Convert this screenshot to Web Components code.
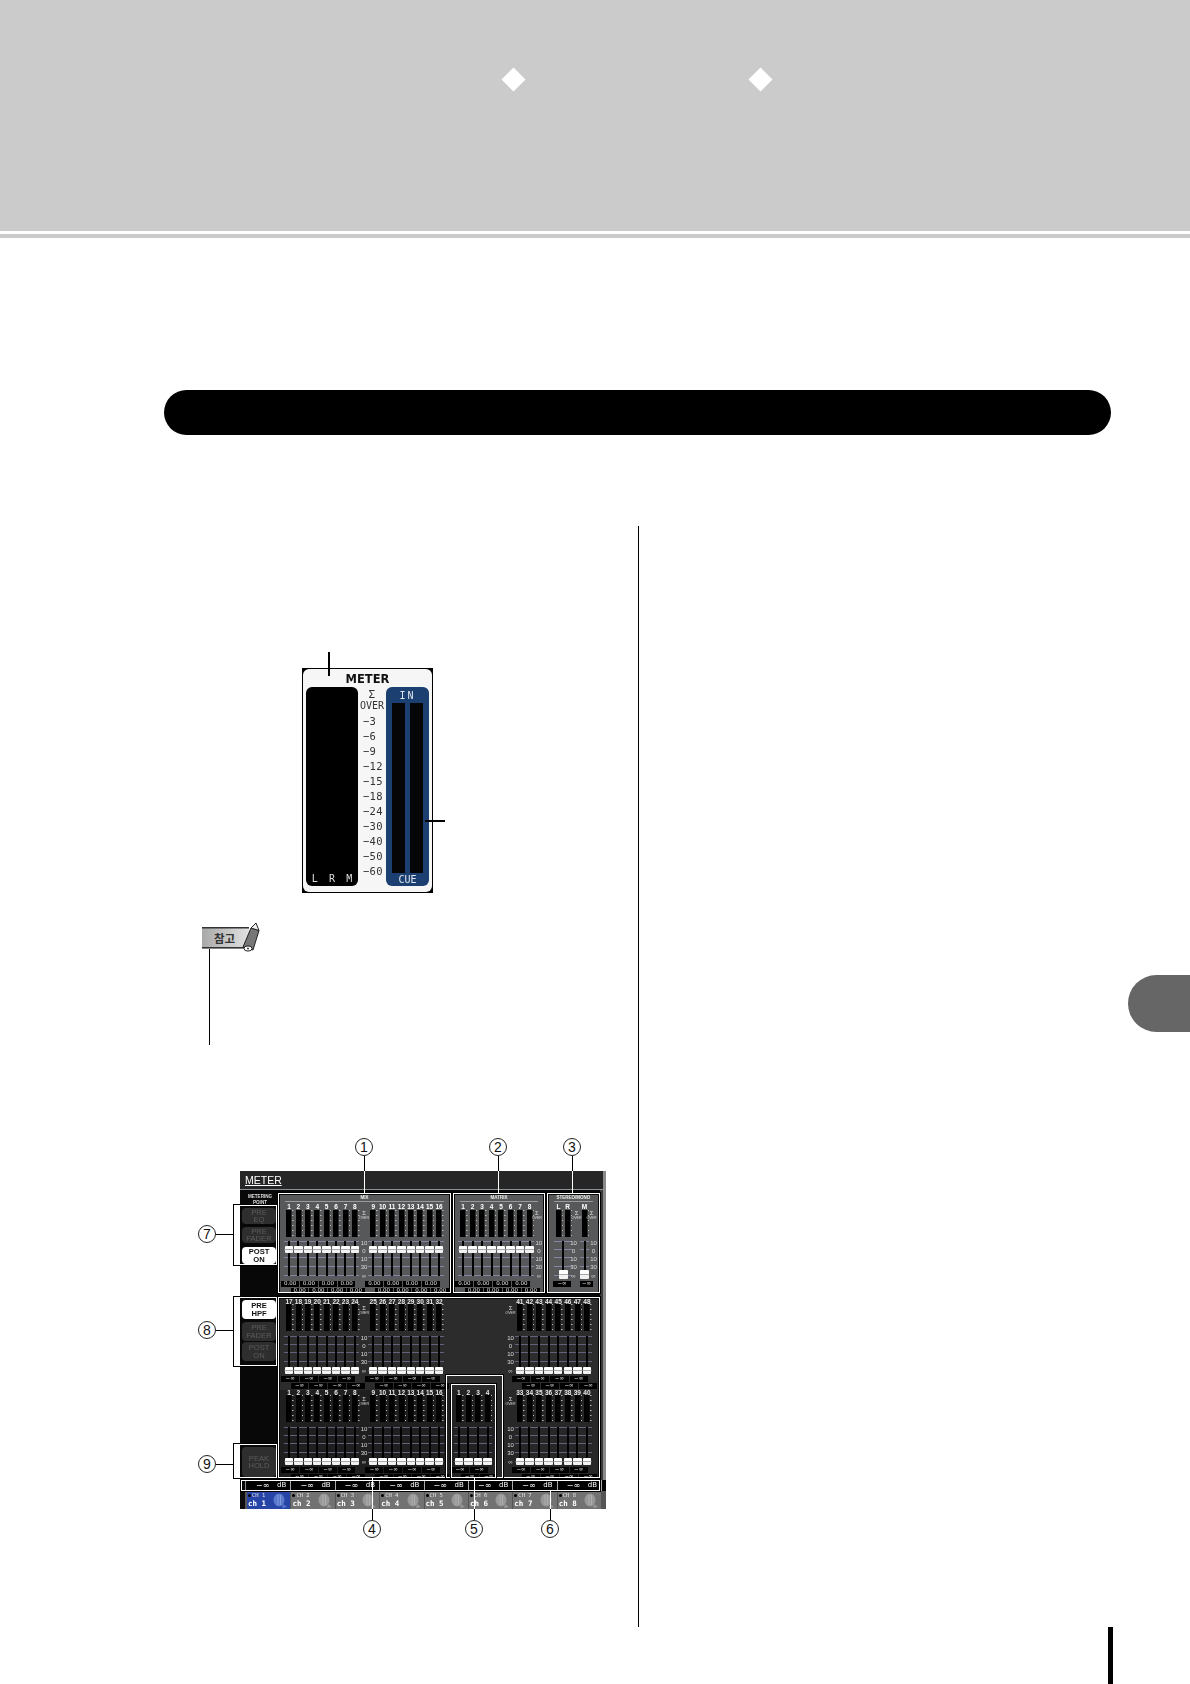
<!DOCTYPE html>
<html lang="ko">
<head>
<meta charset="utf-8">
<title>METER</title>
<style>
  html, body { margin: 0; background: #fff; }
</style>
</head>
<body>
<manual-page>
  <meter-panel slot="left"></meter-panel>
  <note-tag slot="left"></note-tag>
  <meter-screen slot="left"></meter-screen>
</manual-page>

<script>
// Page frame: grey band, black pill, two columns split by a rule
class ManualPage extends HTMLElement {
  constructor() {
    super();
    this.attachShadow({ mode: 'open' });
    this.shadowRoot.innerHTML = `
      <style>
        :host { display: block; width: 1190px; height: 1684px; overflow: hidden; font-family: "Liberation Sans", sans-serif; }
        .band { height: 231px; box-sizing: border-box; background: #cbcbcb; padding: 71px 0 0 505px; display: flex; gap: 230px; }
        .band i { width: 17px; height: 17px; background: #fff; transform: rotate(45deg); }
        .thin { height: 4px; margin-top: 3px; background: #cbcbcb; }
        .pill { margin: 152px 0 0 164px; width: 947px; height: 45px; border-radius: 23px; background: #000; }
        .cols { margin-top: 91px; height: 1101px; display: grid; grid-template-columns: 638px 1fr; }
        .right { border-left: 1px solid #000; padding-top: 449px; }
        .tab { margin-left: auto; width: 62px; height: 57px; border-radius: 29px 0 0 29px; background: #666; }
        .foot { margin-left: 1108px; width: 5px; height: 57px; background: #000; }
      </style>
      <div class="band"><i></i><i></i></div>
      <div class="thin"></div>
      <div class="pill"></div>
      <div class="cols">
        <div><slot name="left"></slot></div>
        <div class="right"><div class="tab"></div></div>
      </div>
      <div class="foot"></div>
    `;
  }
}

// The small METER panel with the big scale
class MeterPanel extends HTMLElement {
  constructor() {
    super();
    this.attachShadow({ mode: 'open' });
    const marks = ['−3','−6','−9','−12','−15','−18','−24','−30','−40','−50','−60'];
    this.shadowRoot.innerHTML = `
      <style>
        :host { display: block; position: relative; width: 131px; height: 225px; margin: 142px 0 0 302px; background: #000; font-family: "DejaVu Sans Mono", monospace; }
        .inner { position: absolute; inset: 1px; border-radius: 6px; background: #f6f6f6; box-sizing: border-box; padding: 0 3px; filter: blur(.3px); }
        .title { height: 18px; padding-top: 3px; box-sizing: border-box; text-align: center; font: bold 11.5px/14px "DejaVu Sans", sans-serif; color: #111; }
        .row { display: flex; height: 199px; }
        .lamp { width: 52px; border-radius: 6px; background: #000; color: #ddd; font-size: 10px; display: flex; align-items: flex-end; justify-content: space-around; padding: 0 0 2px; box-sizing: border-box; }
        .scale { width: 28px; color: #333; font-size: 10.5px; letter-spacing: .3px; }
        .scale div { height: 15px; line-height: 15px; padding-left: 5px; }
        .scale .sigma { height: 16px; line-height: 16px; text-align: center; padding: 0; font-size: 11px; }
        .scale .over { height: 6px; line-height: 6px; margin-bottom: 5px; padding: 0; text-align: center; font-size: 10px; letter-spacing: 0; }
        .cue { width: 43px; border-radius: 6px; background: #1b3f70; color: #dfe6ee; font-size: 10px; text-align: center; }
        .cue .lbl { height: 16px; line-height: 17px; letter-spacing: 2px; }
        .cue .lbl.b { height: 13px; line-height: 14px; letter-spacing: 0; }
        .bars { height: 170px; display: flex; justify-content: center; gap: 5px; }
        .bars i { width: 13px; background: #060606; }
        .lead { position: absolute; background: #000; }
      </style>
      <div class="inner">
        <div class="title">METER</div>
        <div class="row">
          <div class="lamp"><span>L</span><span>R</span><span>M</span></div>
          <div class="scale">
            <div class="sigma">Σ</div><div class="over">OVER</div>
            ${marks.map(m => `<div>${m}</div>`).join('')}
          </div>
          <div class="cue">
            <div class="lbl">IN</div>
            <div class="bars"><i></i><i></i></div>
            <div class="lbl b">CUE</div>
          </div>
        </div>
      </div>
      <div class="lead" style="left:26px;top:-16px;width:1.5px;height:24px"></div>
      <div class="lead" style="left:123px;top:152px;width:20px;height:1.5px"></div>
    `;
  }
}

// 참고 ribbon with its rule going down
class NoteTag extends HTMLElement {
  constructor() {
    super();
    this.attachShadow({ mode: 'open' });
    this.shadowRoot.innerHTML = `
      <style>
        :host { display: block; margin: 28px 0 0 201px; width: 60px; }
        .tag { position: relative; height: 32px; margin-bottom: -4px; }
        svg { display: block; }
        span { position: absolute; left: 1.5px; top: 6px; width: 44px; height: 21px; display: flex; align-items: center; justify-content: center; font: bold 11.5px "Noto Sans CJK KR", sans-serif; color: #333; }
        .rule { margin-left: 7.5px; width: 1.5px; height: 96px; background: #000; }
      </style>
      <div class="tag">
        <svg width="60" height="32" viewBox="0 0 60 32">
          <defs><linearGradient id="g" x1="0" x2="1" y1="0" y2="0">
            <stop offset="0" stop-color="#a8a8a8"/><stop offset=".55" stop-color="#c8c8c8"/><stop offset="1" stop-color="#e2e2e2"/>
          </linearGradient></defs>
          <rect x="1" y="6" width="47" height="21" fill="url(#g)"/>
          <rect x="1" y="6" width="47" height="1.5" fill="#333"/>
          <rect x="1" y="26" width="44" height="1.6" fill="#333"/>
          <path d="M50 7 L58 9.5 L52 29 L42 26 Z" fill="#777" stroke="#222" stroke-width="1"/>
          <path d="M50 7 L55 2 L58 9.5 Z" fill="#eee" stroke="#222" stroke-width="1"/>
          <ellipse cx="47" cy="27.5" rx="4" ry="2.6" fill="#fff" stroke="#222" stroke-width="1"/>
          <circle cx="47" cy="27.5" r=".9" fill="#222"/>
        </svg>
        <span>참고</span>
      </div>
      <div class="rule"></div>
    `;
  }
}

// A bank of meter strips: labels, meters, faders, value boxes
class FaderBank extends HTMLElement {
  constructor() {
    super();
    this.attachShadow({ mode: 'open' });
  }
  connectedCallback() {
    const labels = (this.getAttribute('labels') || '').split(' ');
    const strip = parseFloat(this.getAttribute('strip') || '9.4');
    const faders = parseInt(this.getAttribute('faders') || labels.length);
    const boxes = parseInt(this.getAttribute('boxes') || Math.ceil(labels.length / 2));
    const rows = parseInt(this.getAttribute('rows') || 2);
    const value = this.getAttribute('value') || '−∞';
    const knobs = Array.from({ length: faders }, () => '<div class="f"><i></i><b></b></div>').join('');
    const vals = Array.from({ length: boxes }, () => `<b>${value}</b>`).join('');
    this.shadowRoot.innerHTML = `
      <style>
        :host { display: block; flex: none; --s: ${strip}px; width: calc(var(--s) * ${labels.length}); color: #fff; font-family: "Liberation Sans", sans-serif; --box: calc(var(--s) * 2 - 1px); --off: -3px; }
        .labels { display: flex; height: 6px; font: bold 6.5px/6px "Liberation Sans", sans-serif; }
        :host([dark]) .labels { height: 5px; line-height: 5px; color: #e8e8e8; }
        :host([under]) .labels span { text-decoration: underline; }
        .labels span { flex: 1; text-align: center; white-space: nowrap; }
        .meters { display: flex; height: 27px; margin-bottom: 4px; }
        :host([dark]) .meters { margin-bottom: 5px; }
        .meters i { flex: 1; background:
          linear-gradient(#000, #000) center / 5.5px 100% no-repeat,
          repeating-linear-gradient(#b8b8b8 0 1px, transparent 1px 5px) right / 1.5px 100% no-repeat; }
        .faders { display: flex; height: 35px; margin-bottom: 5px; background:
          linear-gradient(var(--line), var(--line)) 0 0 / 100% 1px no-repeat,
          linear-gradient(var(--line), var(--line)) 0 8px / 100% 1px no-repeat,
          linear-gradient(var(--line), var(--line)) 0 16px / 100% 1px no-repeat,
          linear-gradient(var(--line), var(--line)) 0 25px / 100% 1px no-repeat,
          linear-gradient(var(--line), var(--line)) 0 34px / 100% 1px no-repeat;
          --line: #8585a5; }
        :host([dark]) .faders { --line: #62627e; }
        .f { flex: 1; position: relative; }
        .f i { position: absolute; left: calc(50% - 1px); top: 0; bottom: 0; width: 2px; background: #000; }
        .f b { position: absolute; left: calc(50% - 4.25px); width: 8.5px; height: 7px; border-radius: 1px; top: ${this.getAttribute('knob') === 'bottom' ? 31 : 5}px;
          background: linear-gradient(#fff 0 45%, #aaa 45% 55%, #f2f2f2 55%); }
        :host([big]) .f b { width: 9px; left: calc(50% - 4.5px); height: 9px; top: 29px; }
        .v { display: flex; height: 5.5px; margin-left: var(--off); margin-bottom: 1.5px; }
        .v b { flex: none; width: var(--box); margin-right: 1px; background: #000; font: 5.5px/5.5px "DejaVu Sans", sans-serif; text-align: center; overflow: hidden; color: #e4e4e4; white-space: nowrap; }
        .v.two { margin-left: calc(var(--s) - 3px); }
      </style>
      <div class="labels">${labels.map(l => `<span>${l}</span>`).join('')}</div>
      <div class="meters">${labels.map(() => '<i></i>').join('')}</div>
      <div class="faders">${knobs}</div>
      <div class="v">${vals}</div>
      ${rows > 1 ? `<div class="v two">${vals}</div>` : ''}
    `;
  }
}

// Σ OVER and dB marks set between banks
class BankScale extends HTMLElement {
  constructor() {
    super();
    this.attachShadow({ mode: 'open' });
    this.shadowRoot.innerHTML = `
      <style>
        :host { display: block; flex: none; width: 9px; font-family: "Liberation Sans", sans-serif; color: #dcdcdc; text-align: center; }
        .top { height: 39px; box-sizing: border-box; padding-top: 7px; margin-left: var(--top-nudge, 0); font-size: 3.6px; line-height: 4px; }
        .top div { width: 20px; margin-left: -5.5px; }
        .top .s { font-size: 6px; line-height: 5px; }
        .nums { margin-top: -3px; margin-left: var(--nudge, 0); font-size: 6px; line-height: 6px; }
        .nums div { width: 20px; margin-left: -5.5px; height: 8px; }
        .nums div.w { height: 9px; }
      </style>
      <div class="top"><div class="s">Σ</div><div>OVER</div></div>
      <div class="nums"><div>10</div><div>0</div><div>10</div><div class="w">30</div><div>∞</div></div>
    `;
  }
}

// Grey titled box in the upper half of the screen
class MeterGroup extends HTMLElement {
  constructor() {
    super();
    this.attachShadow({ mode: 'open' });
    this.shadowRoot.innerHTML = `
      <style>
        :host { display: block; height: 97px; overflow: hidden; background: #565859; color: #fff; font-family: "Liberation Sans", sans-serif; box-sizing: border-box; }
        .t { height: 6px; font: bold 4.5px/6px "Liberation Sans", sans-serif; text-align: center; color: #eee; }
        .r { height: 1px; margin: 0 5px 2px; background: #9a9a9a; }
        .b { display: flex; padding-left: var(--pad, 4px); }
      </style>
      <div class="t"><slot name="title"></slot></div>
      <div class="r"></div>
      <div class="b"><slot></slot></div>
    `;
  }
}

// Round sidebar key of the screen
class ScreenKey extends HTMLElement {
  constructor() {
    super();
    this.attachShadow({ mode: 'open' });
    this.shadowRoot.innerHTML = `
      <style>
        :host { display: flex; align-items: center; justify-content: center; text-align: center; border-radius: 4px; width: 34px; background: #2e2e2e; color: #5c5c5c; font: 7.6px/7.4px "Liberation Sans", sans-serif; }
        :host([on]) { background: #fff; color: #111; font-weight: bold; }
      </style>
      <slot></slot>
    `;
  }
}

// Bottom channel tab
class ChannelTab extends HTMLElement {
  constructor() {
    super();
    this.attachShadow({ mode: 'open' });
  }
  connectedCallback() {
    const n = this.getAttribute('n');
    const on = this.hasAttribute('on');
    const ghost = on ? '#5b79cc' : '#989898';
    this.shadowRoot.innerHTML = `
      <style>
        :host { flex: none; width: 44.4px; box-sizing: border-box; display: flex; justify-content: space-between; padding: 1px 1px 0 1px; background: #727272; border-right: 1px solid #555; color: #fff; font-family: "DejaVu Sans Mono", monospace; }
        :host([on]) { background: #2745a6; }
        .top { font-size: 5.5px; line-height: 7px; color: #e4e4e4; white-space: nowrap; }
        .top::before { content: ""; display: inline-block; width: 3px; height: 3px; border-radius: 50%; background: #000; margin-right: 1px; }
        .name { font: bold 7.5px/10px "DejaVu Sans Mono", monospace; white-space: nowrap; }
        svg { margin-top: 1px; }
      </style>
      <div><div class="top">CH ${n}</div><div class="name">ch ${n}</div></div>
      <svg width="17" height="16" viewBox="0 0 17 16">
        <ellipse cx="7" cy="7" rx="5.5" ry="6.5" fill="${ghost}"/>
        <path d="M11 11 L15 14 L10 15 Z" fill="${ghost}"/>
        <path d="M6 2 V12 M8.5 2 V12" stroke="${on ? '#7f98dc' : '#aeaeae'}" stroke-width="1"/>
      </svg>
    `;
  }
}

// The METER screen picture, with its frames and numbered leaders
class MeterScreen extends HTMLElement {
  constructor() {
    super();
    this.attachShadow({ mode: 'open' });
    const mix = 'value="0.00" strip="9.4" knob="top"';
    const dark = 'dark strip="9.4" knob="bottom"';
    const darkR = 'dark strip="9.6" knob="bottom"';
    const cells = Array.from({ length: 8 }, () => '<div class="cell"><span>−∞</span><em>dB</em></div>').join('');
    const tabs = [1,2,3,4,5,6,7,8].map(n => `<channel-tab n="${n}"${n === 1 ? ' on' : ''}></channel-tab>`).join('');

    // page coordinates minus the picture origin
    const ox = 240, oy = 1171;
    const frames = [
      [234,1205,277,1265],[234,1297,277,1366],[234,1444,277,1478],
      [278,1193,451,1293],[453,1193,545,1293],[547,1193,600,1293],
      [278,1297,600,1478],[446,1375,503,1478],[451,1384,496,1478],[241,1480,600,1491]
    ];
    const lines = [
      [364,1156,364,1171,'#000'],[364,1171,364,1193,'#fff'],
      [498,1156,498,1171,'#000'],[498,1171,498,1193,'#fff'],
      [572,1156,572,1171,'#000'],[572,1171,572,1193,'#fff'],
      [372,1478,372,1509,'#fff'],[372,1509,372,1520,'#000'],
      [474,1478,474,1509,'#fff'],[474,1509,474,1520,'#000'],
      [550,1491,550,1509,'#fff'],[550,1509,550,1520,'#000'],
      [216,1234,234,1234,'#000'],[216,1330,234,1330,'#000'],[216,1464,234,1464,'#000']
    ];
    const nums = [[1,364,1147],[2,498,1147],[3,572,1147],[4,372,1529],[5,474,1529],[6,550,1529],[7,207,1234],[8,207,1330],[9,207,1464]];
    const marks =
      frames.map(([a,b,c,d]) => `<div class="frame" style="left:${a-ox}px;top:${b-oy}px;width:${c-a}px;height:${d-b}px"></div>`).join('') +
      lines.map(([a,b,c,d,col]) => `<div class="lead" style="left:${a-ox}px;top:${b-oy}px;width:${Math.max(c-a,1.3)}px;height:${Math.max(d-b,1.3)}px;background:${col}"></div>`).join('') +
      nums.map(([n,x,y]) => `<div class="num" style="left:${x-ox-9}px;top:${y-oy-9}px">${n}</div>`).join('');

    this.shadowRoot.innerHTML = `
      <style>
        :host { display: block; position: relative; width: 366px; height: 338px; margin: 126px 0 0 240px; font-family: "Liberation Sans", sans-serif; }
        .pic { width: 366px; height: 338px; display: grid; grid-template-rows: 19px 290px 11px 18px; background: #080808; filter: blur(.35px); overflow: hidden; }
        .bar { background: #262626; border-bottom: 1px solid #8b9499; box-sizing: border-box; padding-left: 5px; color: #fff; font-size: 10.5px; line-height: 18px; border-right: 3px solid #8a8a8a; }
        .bar u { text-underline-offset: 1px; }
        .body { display: flex; }
        .side { width: 38px; flex: none; box-sizing: border-box; padding-left: 2px; }
        .cap { height: 18px; color: #ddd; font: bold 4.6px/6px "Liberation Sans", sans-serif; text-align: center; padding-top: 4px; box-sizing: border-box; }
        .main { flex: 1; box-sizing: border-box; padding: 5px 0 0 2px; background: linear-gradient(90deg, #080808 322px, #3a3a3a 322px, #3a3a3a 325px, #8a8a8a 325px); }
        .upper { display: flex; gap: 6px; height: 97px; margin-bottom: 7px; }
        .lower { width: 318px; height: 179px; overflow: hidden; display: grid; grid-template-columns: 170px 46px 102px; grid-template-rows: 91px 88px; background: #2c2c2c; }
        .cell-l { display: flex; padding-left: 4.3px; overflow: hidden; }
        .cell-l.low { background: #1f1f1f; }
        .cell-c { background: #222; padding-left: 4px; overflow: hidden; }
        .cell-r { display: flex; padding-left: 10px; overflow: hidden; }
        .cell-r.low { background: #272727; }
        .strip { position: relative; display: flex; padding-left: 7px; background: linear-gradient(90deg, #000 5px, #8a8a8a 5px, #8a8a8a 6px, #000 6px); }
        .cell { flex: none; width: 44.4px; box-sizing: border-box; border-right: 1px solid #aaa; color: #fff; font: 8px/11px "DejaVu Sans", sans-serif; display: flex; padding-left: 9px; white-space: nowrap; }
        .cell em { position: absolute; margin-left: 21px; font-style: normal; font-size: 7px; }
        .tabs { display: flex; padding-left: 7px; background: linear-gradient(90deg, #0c0c0c 5px, #555 5px); }
        .frame { position: absolute; box-sizing: border-box; border: 1px solid #fff; outline: 1px solid #000; }
        .lead { position: absolute; }
        .num { position: absolute; width: 18px; height: 18px; box-sizing: border-box; border: 1px solid #222; border-radius: 50%; background: #fff; color: #111; font: 14px/16px "Liberation Sans", sans-serif; text-align: center; }
      </style>
      <div class="pic">
        <div class="bar"><u>METER</u></div>
        <div class="body">
          <div class="side">
            <div class="cap">METERING<br>POINT</div>
            <screen-key style="height:16px;margin-bottom:3px">PRE<br>EQ</screen-key>
            <screen-key style="height:16px;margin-bottom:4px">PRE<br>FADER</screen-key>
            <screen-key on style="height:17px;margin-bottom:36px">POST<br>ON</screen-key>
            <screen-key on style="height:19px;margin-bottom:3px">PRE<br>HPF</screen-key>
            <screen-key style="height:19px;margin-bottom:1px">PRE<br>FADER</screen-key>
            <screen-key style="height:19px;margin-bottom:86px">POST<br>ON</screen-key>
            <screen-key style="height:30px">PEAK<br>HOLD</screen-key>
          </div>
          <div class="main">
            <div class="upper">
              <meter-group style="width:169px;--pad:4.3px">
                <span slot="title">MIX</span>
                <fader-bank labels="1 2 3 4 5 6 7 8" ${mix}></fader-bank>
                <bank-scale></bank-scale>
                <fader-bank labels="9 10 11 12 13 14 15 16" ${mix}></fader-bank>
              </meter-group>
              <meter-group style="width:88px;--pad:3.3px">
                <span slot="title">MATRIX</span>
                <fader-bank labels="1 2 3 4 5 6 7 8" strip="9.5" value="0.00" knob="top"></fader-bank>
                <bank-scale style="--nudge:0px;--top-nudge:-2px"></bank-scale>
              </meter-group>
              <meter-group style="width:49px;--pad:5px">
                <span slot="title">STEREO/MONO</span>
                <fader-bank labels="L R" strip="9" faders="1" boxes="1" rows="1" knob="bottom" big style="--box:18px;--off:-1px"></fader-bank>
                <bank-scale style="width:8px;--nudge:-3px"></bank-scale>
                <fader-bank labels="M" strip="9" faders="1" boxes="1" rows="1" knob="bottom" big style="--box:13px;--off:0px"></fader-bank>
                <bank-scale style="--top-nudge:-2px"></bank-scale>
              </meter-group>
            </div>
            <div class="lower">
              <div class="cell-l">
                <fader-bank labels="17 18 19 20 21 22 23 24" ${dark}></fader-bank>
                <bank-scale></bank-scale>
                <fader-bank labels="25 26 27 28 29 30 31 32" ${dark}></fader-bank>
              </div>
              <div></div>
              <div class="cell-r">
                <bank-scale></bank-scale>
                <fader-bank labels="41 42 43 44 45 46 47 48" ${darkR}></fader-bank>
              </div>
              <div class="cell-l low">
                <fader-bank labels="1 2 3 4 5 6 7 8" ${dark}></fader-bank>
                <bank-scale></bank-scale>
                <fader-bank labels="9 10 11 12 13 14 15 16" ${dark}></fader-bank>
              </div>
              <div class="cell-c">
                <fader-bank labels="1 2 3 4" dark under strip="9.6" knob="bottom"></fader-bank>
              </div>
              <div class="cell-r low">
                <bank-scale></bank-scale>
                <fader-bank labels="33 34 35 36 37 38 39 40" ${darkR}></fader-bank>
              </div>
            </div>
          </div>
        </div>
        <div class="strip">${cells}</div>
        <div class="tabs">${tabs}</div>
      </div>
      ${marks}
    `;
  }
}

customElements.define('fader-bank', FaderBank);
customElements.define('bank-scale', BankScale);
customElements.define('meter-group', MeterGroup);
customElements.define('screen-key', ScreenKey);
customElements.define('channel-tab', ChannelTab);
customElements.define('meter-panel', MeterPanel);
customElements.define('note-tag', NoteTag);
customElements.define('meter-screen', MeterScreen);
customElements.define('manual-page', ManualPage);
</script>
</body>
</html>
